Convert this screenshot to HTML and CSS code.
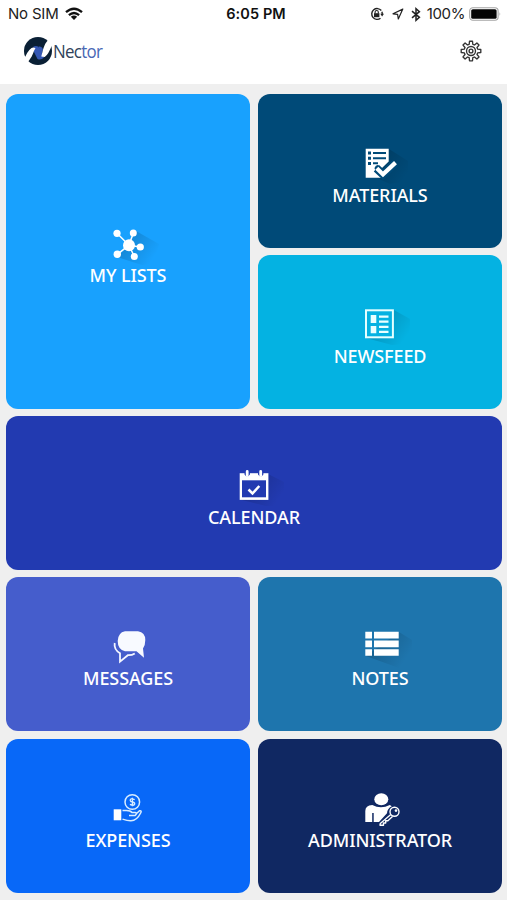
FILE: index.html
```html
<!DOCTYPE html>
<html lang="en">
<head>
<meta charset="utf-8">
<title>Nector</title>
<link rel="stylesheet" href="styles.css">
</head>
<body>
<svg class="defs" width="0" height="0" aria-hidden="true"><defs><linearGradient id="fade" gradientUnits="userSpaceOnUse" x1="30" y1="20" x2="56" y2="38"><stop offset="0" stop-color="#000" stop-opacity=".16"/><stop offset="1" stop-color="#000" stop-opacity="0"/></linearGradient></defs></svg>
<header class="top">
  <div class="status">
    <div class="carrier"><span>No SIM</span>
      <svg width="18" height="14" viewBox="0 0 18 14" fill="none" stroke="#111" stroke-width="2.3"><path d="M1 5.2Q9-1.8 17 5.2M3.9 8.2Q9 3.8 14.1 8.2"/><path d="M5.8 9.7Q9 7.3 12.2 9.7L9 13Z" fill="#111" stroke="none"/></svg>
    </div>
    <time class="clock">6:05 PM</time>
    <div class="indicators">
      <svg class="lock" width="14" height="14" viewBox="0 0 14 14"><path d="M11.300 3.500A5.400 5.400 0 1 0 10.500 11.200M11.900 4.800q.4 1 .3 2.400" fill="none" stroke="#222" stroke-width="1.400"/><path d="M10.300 6.800H14l-1.900 2.600z" fill="#222"/><path d="M4 6.200h5.400v4H4z" fill="#222"/><path d="M5.100 6.500V5.100a1.600 1.600 0 0 1 3.200 0v1.400" fill="none" stroke="#222" stroke-width="1.100"/></svg>
      <svg class="locate" width="12" height="12" viewBox="0 0 12 12"><path d="M10.800 1.100 1 5.800l4.600.5.700 4.700z" fill="none" stroke="#222" stroke-width="1.200" stroke-linejoin="round"/></svg>
      <svg class="bluetooth" width="10" height="15" viewBox="0 0 10 15"><path d="M1 4.200l7.400 6.100L5 13.300V1.700l3.400 3L1 10.800" fill="none" stroke="#222" stroke-width="1.500"/></svg>
      <span class="percent">100%</span>
      <svg class="battery" width="33" height="14" viewBox="0 0 33 14"><rect x=".7" y=".7" width="28.400" height="12.600" rx="3.200" fill="#fff" stroke="#a5a5a5" stroke-width="1.100"/><rect x="2.200" y="2.200" width="25.400" height="9.600" rx="1.600" fill="#050505"/><path d="M30.500 5q1.600 2 0 4z" fill="#aaa"/></svg>
    </div>
  </div>
  <div class="brandbar">
    <div class="brand">
      <svg width="29" height="30" viewBox="0 0 29 30">
        <circle cx="15" cy="15" r="14" fill="#0a2035"/>
        <path d="M10.500 10.500q4-1.500 6 1.500l4.500 9.500q-3 3-6.500 1.500l-3.500-7Z" fill="#3558b4"/>
        <path d="M15.500 10.500q3.500-.5 4.500 3l-1.500 5Z" fill="#3558b4"/>
        <path d="M0 26.500q3.500-11 8.500-14.500 2-1.300 4 .3c-1.500 1.500-1.800 4.500-3.800 8.200L4.300 27Z" fill="#fff"/>
        <path d="M18.300 20.500c1.500-5 2.300-12 6.700-16.200L29 6v3q-3.500 9.500-7.300 12Z" fill="#fff"/>
      </svg>
      <span class="wordmark">Nec<span class="accent">tor</span></span>
    </div>
    <svg class="gear" width="22" height="22" viewBox="0 0 22 22" fill="none" stroke="#333" stroke-width="1.350" stroke-linejoin="round"><path d="M9.200 4.300 9.500 1.200h3l.3 3.100 1.700.7 2.400-2 2.100 2.100-2 2.400.7 1.700 3.100.3v3l-3.100.3-.7 1.700 2 2.400-2.100 2.100-2.400-2-1.700.7-.3 3.100h-3l-.3-3.100-1.700-.7-2.400 2L3 16.900l2-2.400-.7-1.700-3.100-.3v-3l3.100-.3L5 7.500l-2-2.400L5.100 3l2.400 2z"/><circle cx="11" cy="11" r="4.500"/><circle cx="11" cy="11" r="1.900"/></svg>
  </div>
</header>
<main class="tiles">
  <section class="tile lists">
    <svg class="icon" viewBox="0 0 64 44"><path class="shade" d="M40 9 63 22 59 42 46 43 21 35 33 23Z"/><path d="M33 23.200 21 11.300M33 23.200 37.300 11M33 23.200 44.300 25M33 23.200 38.300 34.500M33 23.200 21.300 32.300" stroke="#fff" stroke-width="1.500"/><g fill="#fff"><circle cx="33" cy="23.200" r="6"/><circle cx="21" cy="11.300" r="3.600"/><circle cx="37.300" cy="11" r="3.500"/><circle cx="44.300" cy="25" r="3.600"/><circle cx="38.300" cy="34.500" r="3.500"/><circle cx="21.300" cy="32.300" r="3.700"/></g></svg>
    <h2>MY LISTS</h2>
  </section>
  <section class="tile materials">
    <svg class="icon" viewBox="0 0 64 44"><path class="shade" d="M41 8 60 20V40L42 43 29 37Z"/><path d="M17.700 7.700h23V20.500L34 27l-2.500-2.500q-3.500-1.500-5 2.500 0 2 4 5l3 4.700H17.700Z" fill="#fff"/><path d="M20 10.500h3v3h-3zM20 15.700h3v3h-3zM20 21h3v3h-3zM25 11h13v2H25zM25 16.200h13v2H25zM25 21.200h5v2h-5z" fill="#004a78"/><path d="m28.500 27.500 6.500 6L47.500 22" fill="none" stroke="#004a78" stroke-width="8"/><path d="m28.800 27.200 6.200 6.200 12.500-11.800" fill="none" stroke="#fff" stroke-width="4.200"/></svg>
    <h2>MATERIALS</h2>
  </section>
  <section class="tile news">
    <svg class="icon" viewBox="0 0 64 44"><path class="shade" d="M46 8 62 17V42L44 43 18 36Z"/><rect x="18" y="8.300" width="26.900" height="27" fill="#04b2e2" stroke="#e5ffff" stroke-width="2"/><path d="M22.700 13h5.600v8h-5.600zM22.700 24h5.600v7.200h-5.600zM31 13.500h9.500v2.300H31zM31 18.500h9.500v2.300H31zM31 23.800h9.500v2.300H31zM31 28.800h9.500v2.300H31z" fill="#e8ffff"/></svg>
    <h2>NEWSFEED</h2>
  </section>
  <section class="tile calendar">
    <svg class="icon" viewBox="0 0 64 44"><path class="shade" d="M46 11 62 19V43H44L20 37Z"/><path d="M17.700 10.200h28.700v26.700H17.700z" fill="#fff"/><path d="M20 17.300h24v17H20z" fill="#223ab1"/><path d="M22.500 7h5.400v4.500q-2.700 4-5.400 0zM36 7h5.400v4.500q-2.700 4-5.400 0z" fill="#223ab1"/><path d="M25.200 8.500v4M38.700 8.500v4" stroke="#fff" stroke-width="2.800" stroke-linecap="round"/><path d="m26.500 26.500 4 4 6.800-7.500" fill="none" stroke="#fff" stroke-width="2.500"/></svg>
    <h2>CALENDAR</h2>
  </section>
  <section class="tile messages">
    <svg class="icon" viewBox="0 0 64 44"><path d="M18.700 19q-1 6.500 5.300 10.300v8.400l7.800-6.500q4 .2 7-1.700" fill="none" stroke="#f3f6ff" stroke-width="1.800"/><path d="M29 7.200h13q7.300 1 7.300 8.800 0 5.500-2.300 8.500l1 9.300-7.500-6.500H29q-7.300-1.800-7.300-10.300Q22 8.500 29 7.200Z" fill="#f8faff"/></svg>
    <h2>MESSAGES</h2>
  </section>
  <section class="tile notes">
    <svg class="icon" viewBox="0 0 64 44"><path class="shade" d="m51 8 13 8v22l-13 6-33-12Z"/><path d="M17.300 7.800H24v6.700h-6.700zM26 7.800h24.700v6.700H26zM17.300 16.500H24v6.700h-6.700zM26 16.500h24.700v6.700H26zM17.300 25.300H24v6.500h-6.700zM26 25.300h24.700v6.500H26z" fill="#fff"/></svg>
    <h2>NOTES</h2>
  </section>
  <section class="tile expenses">
    <svg class="icon" viewBox="0 0 64 44"><path d="M17.700 23.300h7.600v11h-7.600z" fill="#fff"/><g fill="none" stroke="#d9edff" stroke-width="1.500"><circle cx="36.300" cy="16" r="7.300"/><path d="M26.500 24.500h4q4 0 5.500 2h3.500q2 1.500-.5 3h-6M39.500 28.500l4-3.700q2.500-.5 1.300 2-4 8-9.800 8-3 .2-8.500-1.700" stroke-linejoin="round"/></g><path d="M38.700 13.700q-4.200-2-4.500.5 0 1.500 2.200 1.800 2.500.4 2.300 2-.8 2.300-4.800.4M36.400 11.700v8.600" fill="none" stroke="#d9edff" stroke-width="1.300"/></svg>
    <h2>EXPENSES</h2>
  </section>
  <section class="tile admin">
    <svg class="icon" viewBox="0 0 64 44"><ellipse cx="33.300" cy="13.300" rx="7" ry="6" fill="#fff"/><path d="M17.300 36V25q0-5.500 7-6 8.500 4.500 17.500 0l2 1.200q-4.600 2.300-4.800 7L31 36h-5.300v-9h-1.500v9Z" fill="#fff"/><path d="m42.800 28.500-10.500 9-.3 1.700h3.500v-2.200h2.200v-2.200h2.200l4.600-4.200" fill="#102862" stroke="#fff" stroke-width="1.400" stroke-linejoin="round"/><circle cx="46.500" cy="25.800" r="4.500" fill="#102862" stroke="#fff" stroke-width="1.400"/><circle cx="48" cy="24.600" r="1.300" fill="#fff"/></svg>
    <h2>ADMINISTRATOR</h2>
  </section>
</main>
</body>
</html>
```
FILE: styles.css
```css
* { box-sizing: border-box; }

body {
  margin: 0;
  width: 507px;
  height: 900px;
  overflow: hidden;
  background: #efefef;
  font-family: "Noto Sans", sans-serif;
}

.defs { display: block; }

.top {
  height: 84px;
  background: #fff;
}

.status {
  display: grid;
  grid-template-columns: 1fr auto 1fr;
  align-items: center;
  height: 28px;
  padding: 0 5px 0 8px;
  font: 15px/20px Inter, sans-serif;
  letter-spacing: -.2px;
  color: #222;
}

.carrier, .indicators, .brand { display: flex; align-items: center; }
.carrier { gap: 6px; }
.clock {
  padding-left: 2px;
  font-size: 14.500px;
  font-weight: 600;
  letter-spacing: .1px;
  color: #111;
}
.indicators { justify-content: flex-end; }
.locate { margin-left: 8px; }
.bluetooth { margin-left: 7px; }
.percent { margin-left: 6px; letter-spacing: -.4px; }
.battery { margin-left: 4px; }

.brandbar {
  display: flex;
  justify-content: space-between;
  align-items: center;
  height: 45px;
  padding: 0 25px 0 23px;
}

.wordmark {
  margin-left: 1px;
  font: 19px/24px "Open Sans", sans-serif;
  letter-spacing: -.8px;
  color: #30435b;
  transform: scaleX(.89);
  transform-origin: left;
}
.accent { color: #4968b5; }

.tiles {
  display: grid;
  grid-template-columns: 244px 244px;
  grid-template-rows: repeat(5, 154px);
  gap: 7.150px 8px;
  padding: 10px 6px 0;
}

.tile {
  display: flex;
  flex-direction: column;
  align-items: center;
  justify-content: center;
  border-radius: 12px;
  color: #fff;
}

.icon { display: block; width: 64px; height: 44px; }
.shade { fill: url(#fade); }

h2 {
  margin: 0;
  height: 16px;
  font-size: 18px;
  font-weight: 500;
  line-height: 21px;
  letter-spacing: -.1px;
  white-space: nowrap;
}

.lists { grid-row: span 2; background: #18a1fe; }
.lists h2 { line-height: 19px; }
.materials { background: #004a78; }
.news { background: #04b2e2; }
.calendar { grid-column: span 2; background: #223ab1; }
.messages { background: #455dcc; }
.notes { background: #1e75ad; }
.expenses { background: #0868f8; }
.admin { background: #102862; }
```
